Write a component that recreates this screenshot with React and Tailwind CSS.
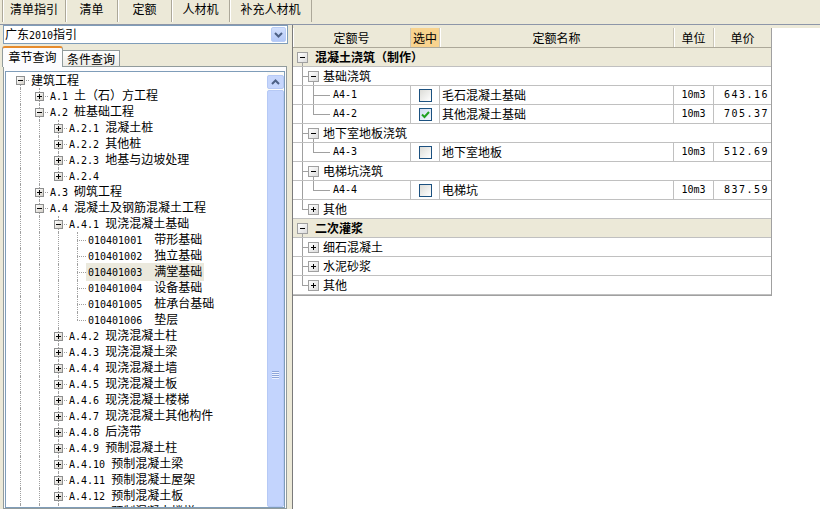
import React from "react";

const ASCII = /^[\x20-\x7e]+$/;

const Mixed = ({ text }) =>
  text
    .split(/([\x20-\x7e]+)/)
    .filter(Boolean)
    .map((part, i) =>
      ASCII.test(part) ? (
        <span key={i} className="whitespace-pre font-['DejaVu_Sans_Mono',monospace] text-[10px]">
          {part}
        </span>
      ) : (
        <span key={i}>{part}</span>
      )
    );

const topTabs = [
  ["清单指引", "w-[64px] border-l"],
  ["清单", "w-[52px]"],
  ["定额", "w-[54px]"],
  ["人材机", "w-[58px]"],
  ["补充人材机", "w-[82px]"],
];

const tree = [
  { d: 0, t: "建筑工程", box: "minus", first: true },
  { d: 1, t: "A.1 土（石）方工程", box: "plus" },
  { d: 1, t: "A.2 桩基础工程", box: "minus" },
  { d: 2, t: "A.2.1 混凝土桩", box: "plus" },
  { d: 2, t: "A.2.2 其他桩", box: "plus" },
  { d: 2, t: "A.2.3 地基与边坡处理", box: "plus" },
  { d: 2, t: "A.2.4", box: "plus", last: true },
  { d: 1, t: "A.3 砌筑工程", box: "plus" },
  { d: 1, t: "A.4 混凝土及钢筋混凝土工程", box: "minus" },
  { d: 2, t: "A.4.1 现浇混凝土基础", box: "minus" },
  { d: 3, t: "010401001  带形基础" },
  { d: 3, t: "010401002  独立基础" },
  { d: 3, t: "010401003  满堂基础", sel: true },
  { d: 3, t: "010401004  设备基础" },
  { d: 3, t: "010401005  桩承台基础" },
  { d: 3, t: "010401006  垫层", last: true },
  { d: 2, t: "A.4.2 现浇混凝土柱", box: "plus" },
  { d: 2, t: "A.4.3 现浇混凝土梁", box: "plus" },
  { d: 2, t: "A.4.4 现浇混凝土墙", box: "plus" },
  { d: 2, t: "A.4.5 现浇混凝土板", box: "plus" },
  { d: 2, t: "A.4.6 现浇混凝土楼梯", box: "plus" },
  { d: 2, t: "A.4.7 现浇混凝土其他构件", box: "plus" },
  { d: 2, t: "A.4.8 后浇带", box: "plus" },
  { d: 2, t: "A.4.9 预制混凝土柱", box: "plus" },
  { d: 2, t: "A.4.10 预制混凝土梁", box: "plus" },
  { d: 2, t: "A.4.11 预制混凝土屋架", box: "plus" },
  { d: 2, t: "A.4.12 预制混凝土板", box: "plus" },
  { d: 2, t: "A.4.13 预制混凝土楼梯", box: "plus" },
];

const lvLeft = ["left-[14px]", "left-[33px]", "left-[52px]", "left-[71px]"];
const boxLeft = ["left-[10px]", "left-[29px]", "left-[48px]", "left-[67px]"];
const textLeft = ["pl-[23px]", "pl-[42px]", "pl-[61px]", "pl-[80px]"];
const DOT = "border-l border-dotted border-[#a0a0a0]";

const TreeBox = ({ plus, className }) => (
  <span
    className={`absolute top-[4px] h-[9px] w-[9px] border border-[#8e8f8f] bg-gradient-to-br from-white to-[#d4d0c8] ${className}`}
  >
    <span className="absolute left-[1px] top-[3px] h-[1px] w-[5px] bg-black" />
    {plus && <span className="absolute left-[3px] top-[1px] h-[5px] w-[1px] bg-black" />}
  </span>
);

const TreeRow = ({ row }) => {
  const { d, t, box, first, last, sel } = row;
  return (
    <div className="relative h-[16px]">
      {Array.from({ length: d }).map((_, a) => (
        <span key={a} className={`absolute bottom-0 top-0 ${lvLeft[a]} ${DOT}`} />
      ))}
      {!first && <span className={`absolute top-0 h-[8px] ${lvLeft[d]} ${DOT}`} />}
      {!last && <span className={`absolute bottom-0 top-[8px] ${lvLeft[d]} ${DOT}`} />}
      <span className={`absolute top-[8px] w-[9px] ${lvLeft[d]} border-t border-dotted border-[#a0a0a0]`} />
      {box && <TreeBox plus={box === "plus"} className={boxLeft[d]} />}
      <div className={`flex h-full items-center ${textLeft[d]}`}>
        <span className={`whitespace-nowrap px-[2px] leading-[16px] ${sel ? "bg-[#ebe9dd]" : ""}`}>
          <Mixed text={t} />
        </span>
      </div>
    </div>
  );
};

const Chevron = ({ up }) => (
  <svg width="9" height="6" viewBox="0 0 9 6">
    <path d={up ? "M1 5 4.5 1.5 8 5" : "M1 1 4.5 4.5 8 1"} fill="none" stroke="#4d6185" strokeWidth="2" />
  </svg>
);

const LeftPanel = () => (
  <div className="flex w-[289px] shrink-0 flex-col pl-[3px] pr-[2px]">
    <div className="-mr-[1px] flex h-[19px] items-center border border-[#7f9db9] bg-white pl-[1px]">
      <span className="flex-1 leading-[16px]">
        <Mixed text="广东2010指引" />
      </span>
      <span className="mr-[1px] flex h-[15px] w-[15px] items-center justify-center rounded-[2px] border border-[#b9cdf6] bg-gradient-to-b from-[#d3e0fd] to-[#b3c8f7]">
        <Chevron />
      </span>
    </div>
    <div className="mt-[2px] flex h-[20px] items-end">
      <div className="relative z-10 -mb-[1px] -ml-[1px] flex h-[21px] w-[61px] justify-center rounded-t-[3px] border-x border-t-2 border-[#919b9c] border-t-[#e68b2c] bg-[#fcfcfe] pt-[1px] leading-[16px]">
        章节查询
      </div>
      <div className="flex h-[16px] w-[57px] items-center justify-center border border-b-0 border-l-0 border-[#919b9c] bg-gradient-to-b from-white to-[#ecebe6] leading-[16px]">
        条件查询
      </div>
    </div>
    <div className="flex min-h-0 flex-1 flex-col border border-[#919b9c] bg-[#fcfcfe] px-[1px] pt-[4px]">
      <div className="flex min-h-0 flex-1 border border-[#7f9db9] bg-white">
        <div className="min-w-0 flex-1 overflow-hidden">
          {tree.map((r, i) => (
            <TreeRow key={i} row={r} />
          ))}
        </div>
        <div className="flex w-[17px] shrink-0 flex-col bg-[#fbfbf8] pt-[3px]">
          <div className="flex h-[14px] items-center justify-center rounded-[2px] border border-[#b6c9f5] bg-[#c6d6fc]">
            <Chevron up />
          </div>
          <div className="mt-[1px] flex flex-1 flex-col items-center rounded-[2px] border border-[#b6c9f5] bg-[#c3d4fd] pt-[280px]">
            {[0, 1, 2, 3].map((k) => (
              <span key={k} className="mb-[1px] h-[1px] w-[7px] bg-[#8ea6da] shadow-[0_1px_0_#eef3ff]" />
            ))}
          </div>
        </div>
      </div>
    </div>
  </div>
);

const cols = ["w-[118px]", "w-[29px]", "w-[234px]", "w-[40px]", "w-[57px]"];

const rows = [
  { k: "group", t: "混凝土浇筑（制作）" },
  { k: "sub", t: "基础浇筑", open: true },
  { k: "leaf", code: "A4-1", name: "毛石混凝土基础", unit: "10m3", price: "643.16" },
  { k: "leaf", code: "A4-2", name: "其他混凝土基础", unit: "10m3", price: "705.37", checked: true, last: true },
  { k: "sub", t: "地下室地板浇筑", open: true },
  { k: "leaf", code: "A4-3", name: "地下室地板", unit: "10m3", price: "512.69", last: true },
  { k: "sub", t: "电梯坑浇筑", open: true },
  { k: "leaf", code: "A4-4", name: "电梯坑", unit: "10m3", price: "837.59", last: true },
  { k: "sub", t: "其他", last: true },
  { k: "group", t: "二次灌浆" },
  { k: "sub", t: "细石混凝土" },
  { k: "sub", t: "水泥砂浆" },
  { k: "sub", t: "其他", last: true },
];

const LINE = "bg-[#a0a0a0]";

const GridBox = ({ plus, className }) => (
  <span
    className={`absolute top-[4px] h-[11px] w-[11px] border border-[#a0a0a0] bg-gradient-to-br from-white to-[#dcdcdc] ${className}`}
  >
    <span className="absolute left-[2px] top-[4px] h-[1px] w-[5px] bg-black" />
    {plus && <span className="absolute left-[4px] top-[2px] h-[5px] w-[1px] bg-black" />}
  </span>
);

const CheckBox = ({ checked }) => (
  <span
    className={`flex h-[13px] w-[13px] items-center justify-center border border-[#1c5180] bg-gradient-to-br ${
      checked ? "from-[#cfdcf0] to-[#f4f8fd]" : "from-[#dcdcd7] to-white"
    }`}
  >
    {checked && (
      <svg width="9" height="9" viewBox="0 0 9 9">
        <path d="M1 4.5 3.5 7 8 2" fill="none" stroke="#21a121" strokeWidth="2" />
      </svg>
    )}
  </span>
);

const GridRow = ({ r }) => {
  if (r.k === "group") {
    return (
      <div className="relative flex h-[19px] items-center border-b border-[#c0c0c0] bg-[#ece9d8] pl-[22px] font-bold">
        <GridBox className="left-[4px]" />
        <span className="absolute bottom-0 left-[9px] top-[15px] w-[1px] bg-[#a0a0a0]" />
        {r.t}
      </div>
    );
  }
  if (r.k === "sub") {
    return (
      <div className="relative flex h-[19px] items-center border-b border-[#c0c0c0] pl-[30px]">
        <span className={`absolute left-[9px] top-0 h-[9px] w-[1px] ${LINE}`} />
        {!r.last && <span className={`absolute bottom-0 left-[9px] top-[9px] w-[1px] ${LINE}`} />}
        <span className={`absolute left-[9px] top-[9px] h-[1px] w-[6px] ${LINE}`} />
        <GridBox plus={!r.open} className="left-[15px]" />
        {r.open && <span className={`absolute bottom-0 left-[20px] top-[15px] w-[1px] ${LINE}`} />}
        {r.t}
      </div>
    );
  }
  return (
    <div className="flex h-[19px] border-b border-[#c0c0c0]">
      <div className={`relative flex items-center border-r border-[#c0c0c0] pl-[40px] ${cols[0]}`}>
        <span className={`absolute bottom-0 left-[9px] top-0 w-[1px] ${LINE}`} />
        <span className={`absolute left-[20px] top-0 h-[9px] w-[1px] ${LINE}`} />
        {!r.last && <span className={`absolute bottom-0 left-[20px] top-[9px] w-[1px] ${LINE}`} />}
        <span className={`absolute left-[20px] top-[9px] h-[1px] w-[17px] ${LINE}`} />
        <Mixed text={r.code} />
      </div>
      <div className={`flex items-center justify-center border-r border-[#c0c0c0] ${cols[1]}`}>
        <CheckBox checked={r.checked} />
      </div>
      <div className={`flex items-center border-r border-[#c0c0c0] pl-[2px] ${cols[2]}`}>{r.name}</div>
      <div className={`flex items-center justify-center border-r border-[#c0c0c0] ${cols[3]}`}>
        <Mixed text={r.unit} />
      </div>
      <div className={`flex items-center justify-end pr-[2px] tracking-[1.5px] ${cols[4]}`}>
        <Mixed text={r.price} />
      </div>
    </div>
  );
};

const headers = ["定额号", "选中", "定额名称", "单位", "单价"];

const RightPanel = () => (
  <div className="flex min-w-0 flex-1 flex-col border-l border-[#7a7a7a] bg-white">
    <div className="h-[3px] bg-[#ece9d8]" />
    <div className="w-[479px] border-b border-r border-[#a0a0a0]">
      <div className="flex h-[20px] border-b border-[#aca899] bg-[#ece9d8]">
        {headers.map((h, i) => (
          <div
            key={h}
            className={`flex items-center justify-center ${cols[i]} ${i < 4 ? "border-r border-[#cbc7b8]" : ""} ${
              i === 1 ? "bg-[#f8d38e]" : "shadow-[inset_1px_0_0_#fff]"
            }`}
          >
            {h}
          </div>
        ))}
      </div>
      {rows.map((r, i) => (
        <GridRow key={i} r={r} />
      ))}
    </div>
  </div>
);

export default function App() {
  return (
    <div className="flex h-[509px] w-[820px] flex-col overflow-hidden bg-[#ece9d8] font-['Noto_Sans_CJK_SC',sans-serif] text-[12px] leading-[16px] text-black">
      <div className="flex h-[25px] shrink-0 border-b border-[#8d96a8] pl-[2px]">
        {topTabs.map(([t, w]) => (
          <div
            key={t}
            className={`flex h-[22px] justify-center border-r border-[#aca899] pt-[1px] leading-[16px] shadow-[inset_1px_0_0_#fff] ${w}`}
          >
            {t}
          </div>
        ))}
      </div>
      <div className="flex min-h-0 flex-1">
        <LeftPanel />
        <div className="w-[3px] shrink-0" />
        <RightPanel />
      </div>
    </div>
  );
}
